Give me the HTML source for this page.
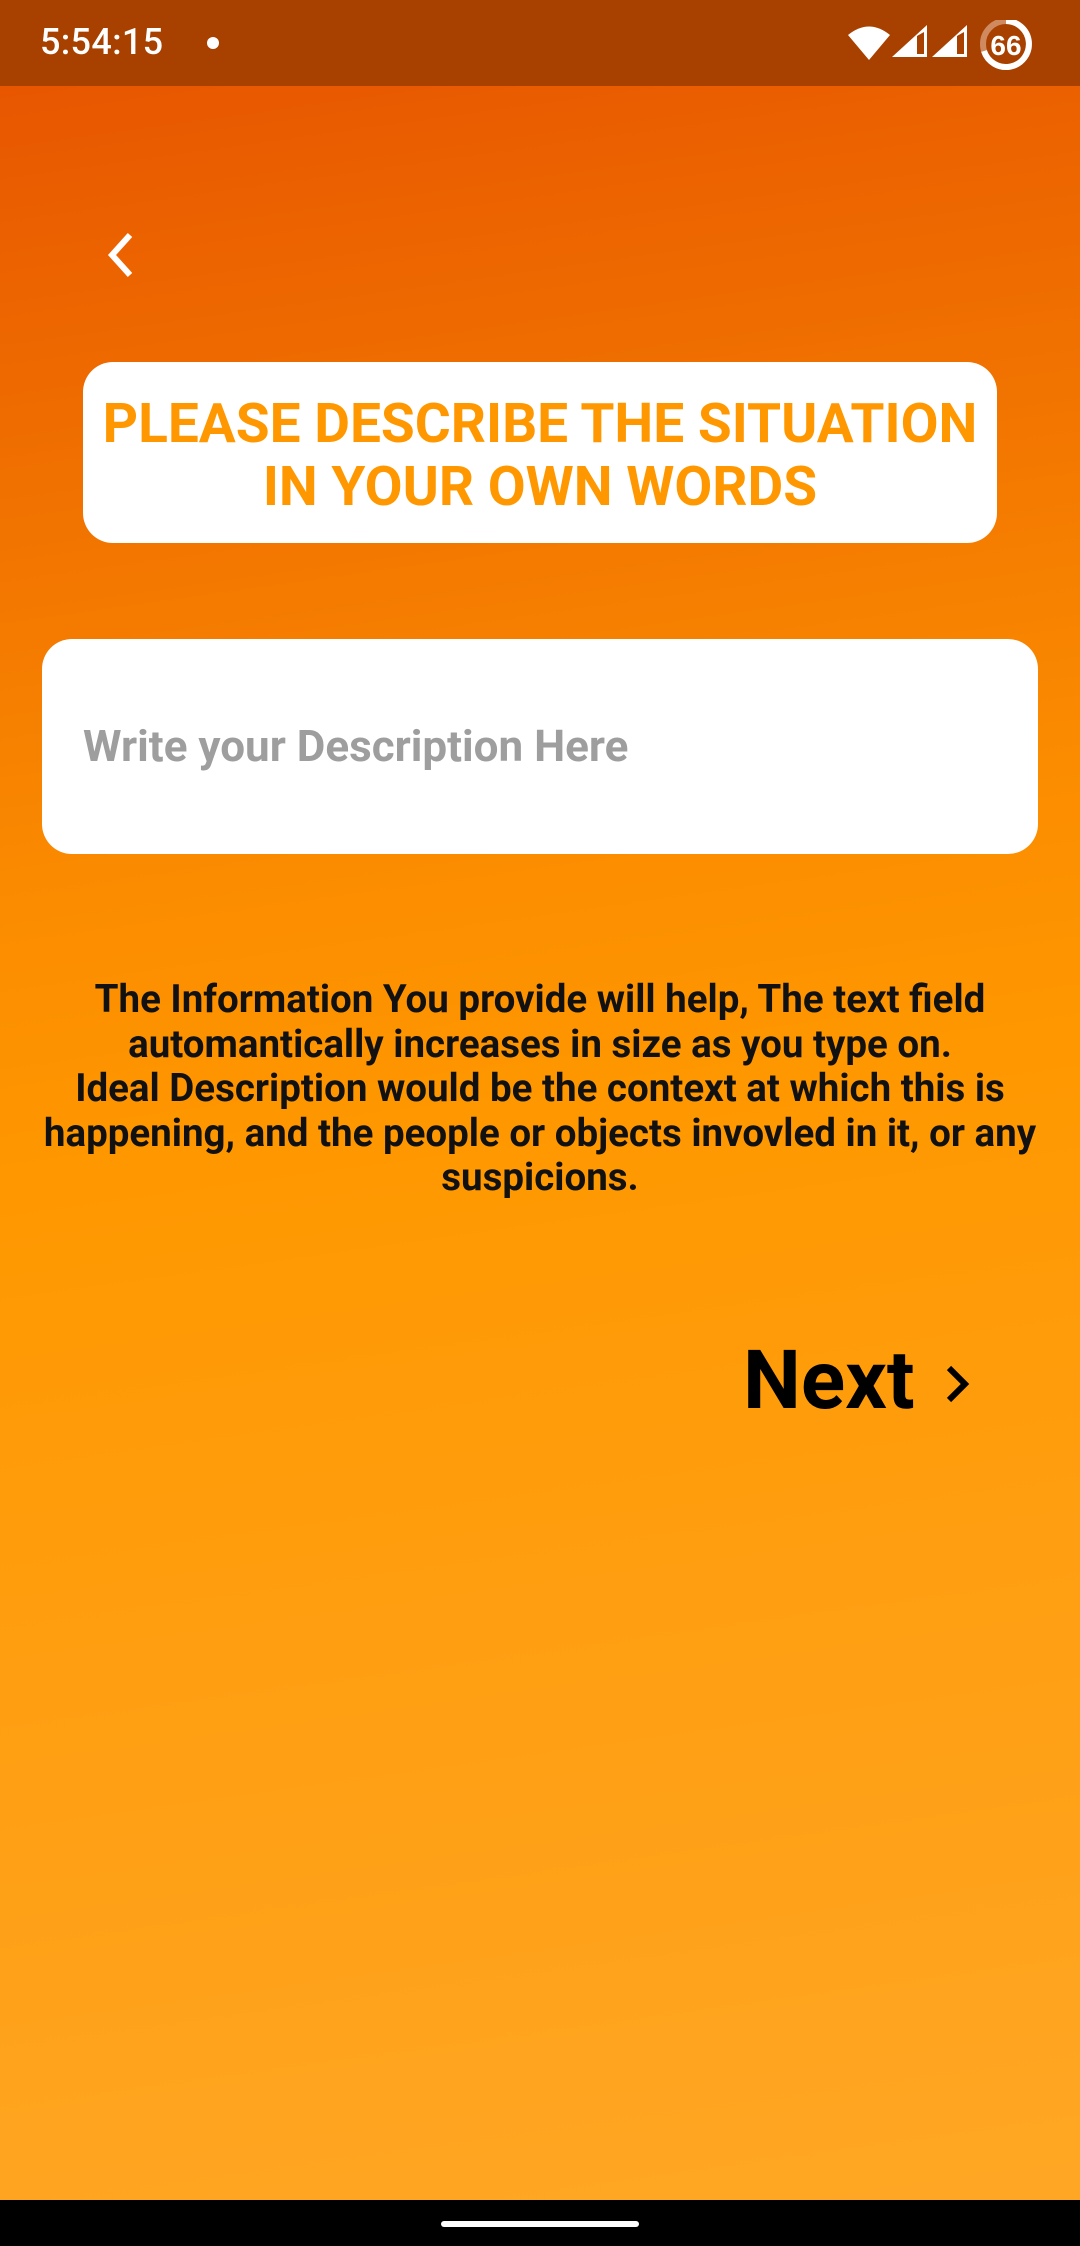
<!DOCTYPE html>
<html><head><meta charset="utf-8"><style>
*{margin:0;padding:0;box-sizing:border-box}
body{width:1080px;height:2246px;overflow:hidden;font-family:"Roboto","Liberation Sans",sans-serif;position:relative;
background:linear-gradient(172deg,#e65100 0%,#f07000 20%,#fb8c00 38%,#ff9800 50%,#ff9e10 70%,#ffa726 100%)}
.sb{position:absolute;left:0;top:0;width:1080px;height:86px;background:#a84000}
.time{position:absolute;left:40px;top:21px;color:#fff;font-size:36px;font-weight:500;letter-spacing:0.3px}
.dot{position:absolute;left:207px;top:37px;width:12px;height:12px;border-radius:50%;background:#fff}
.title{position:absolute;left:83px;top:362px;width:914px;height:181px;background:#fff;border-radius:30px;color:#ff9800;font-weight:bold;font-size:55px;text-align:center;line-height:63px;padding-top:31px;white-space:nowrap}
.inp{position:absolute;left:42px;top:639px;width:996px;height:215px;background:#fff;border-radius:30px}
.ph{position:absolute;left:83px;top:720px;color:#9e9e9e;font-weight:bold;font-size:44px}
.info{position:absolute;left:0;width:1080px;top:978px;text-align:center;font-weight:bold;font-size:38.5px;line-height:44.5px;color:#111;white-space:nowrap}
.next{position:absolute;left:743px;top:1333px;font-weight:bold;font-size:82px;color:#000}
.nav{position:absolute;left:0;top:2200px;width:1080px;height:46px;background:#000}
.pill{position:absolute;left:441px;top:2221px;width:198px;height:6px;border-radius:3px;background:#fff}
</style></head><body>
<div class="sb">
<div class="time">5:54:15</div><div class="dot"></div>
<svg style="position:absolute;left:840px;top:20px" width="240" height="55" viewBox="840 20 240 55">
<path d="M848 35 Q869 18 890 35 L869 60 Z" fill="#fff"/>
<path d="M892 57 L927 25 L927 57 Z" fill="#fff"/>
<path d="M917 36 L917 54 L924 54 L924 32 Z" fill="#a84000"/>
<path d="M932 57 L967 25 L967 57 Z" fill="#fff"/>
<path d="M957 36 L957 54 L964 54 L964 32 Z" fill="#a84000"/>
<circle cx="1006" cy="44" r="23" fill="none" stroke="#d08a60" stroke-width="6"/>
<path d="M1006 21 A23 23 0 1 1 984 51" fill="none" stroke="#fff" stroke-width="6"/>
<text x="1006" y="55" text-anchor="middle" font-family="Liberation Sans" font-weight="bold" font-size="28" fill="#fff">66</text>
</svg>
</div>
<svg style="position:absolute;left:100px;top:230px" width="40" height="50"><path d="M30 5 L12 25 L30 45" stroke="#fff" stroke-width="6" fill="none"/></svg>
<div class="title">PLEASE DESCRIBE THE SITUATION<br>IN YOUR OWN WORDS</div>
<div class="inp"></div>
<div class="ph">Write your Description Here</div>
<div class="info">The Information You provide will help, The text field<br>automantically increases in size as you type on.<br>Ideal Description would be the context at which this is<br>happening, and the people or objects invovled in it, or any<br>suspicions.</div>
<div class="next">Next</div>
<svg style="position:absolute;left:937px;top:1360px" width="40" height="50"><path d="M12 8 L28 24 L12 40" stroke="#000" stroke-width="6" fill="none"/></svg>
<div class="nav"></div><div class="pill"></div>
</body></html>
